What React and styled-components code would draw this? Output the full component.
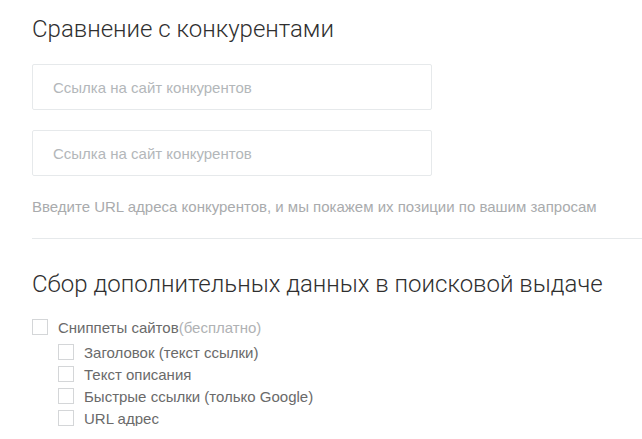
import React from "react";
import styled, { createGlobalStyle } from "styled-components";

const Global = createGlobalStyle`
  html, body { margin: 0; padding: 0; background: #fff; }
  body { font-family: "Liberation Sans", Arial, sans-serif; }
  * { box-sizing: border-box; }
`;

const Page = styled.div`
  padding: 15px 0 0 32px;
  width: 642px;
`;

const Heading = styled.h2`
  margin: ${(p) => p.$top || 0}px 0 0 0;
  font-family: Roboto, "Liberation Sans", sans-serif;
  font-weight: 300;
  font-size: 24px;
  line-height: 28px;
  color: #2f2f2f;
`;

const Field = styled.input`
  display: block;
  width: 400px;
  height: 46px;
  margin-top: ${(p) => p.$top}px;
  padding: 0 20px;
  border: 1px solid #e6e9eb;
  border-radius: 2px;
  font-family: "Liberation Sans", Arial, sans-serif;
  font-size: 15px;
  color: #333;
  outline: none;
  &::placeholder { color: #b3b7ba; }
`;

const Hint = styled.p`
  margin: 22px 0 0;
  font-size: 15px;
  line-height: 18px;
  color: #a9abad;
`;

const Divider = styled.hr`
  margin: 22px 0 0;
  border: 0;
  height: 1px;
  background: #e6e9eb;
`;

const List = styled.div`
  display: flex;
  flex-direction: column;
  gap: 6px;
  margin-top: 21px;
`;

const Row = styled.label`
  display: flex;
  align-items: center;
  gap: 10px;
  height: 16px;
  margin-left: ${(p) => (p.$sub ? 26 : 0)}px;
  margin-bottom: ${(p) => (p.$first ? 3 : 0)}px;
  font-size: 15px;
  color: #6a6a6a;
`;

const Box = styled.span`
  width: 16px;
  height: 16px;
  border: 1px solid #d4d6d8;
  background: #fff;
  flex: none;
`;

const Muted = styled.span`
  color: #b0b2b4;
`;

export default function App() {
  return (
    <>
      <Global />
      <Page>
        <Heading>Сравнение с конкурентами</Heading>
        <Field $top={21} placeholder="Ссылка на сайт конкурентов" />
        <Field $top={20} placeholder="Ссылка на сайт конкурентов" />
        <Hint>Введите URL адреса конкурентов, и мы покажем их позиции по вашим запросам</Hint>
        <Divider />
        <Heading $top={31}>Сбор дополнительных данных в поисковой выдаче</Heading>
        <List>
          <Row $first>
            <Box />
            <span>
              Сниппеты сайтов<Muted>(бесплатно)</Muted>
            </span>
          </Row>
          <Row $sub>
            <Box />
            Заголовок (текст ссылки)
          </Row>
          <Row $sub>
            <Box />
            Текст описания
          </Row>
          <Row $sub>
            <Box />
            Быстрые ссылки (только Google)
          </Row>
          <Row $sub>
            <Box />
            URL адрес
          </Row>
        </List>
      </Page>
    </>
  );
}
